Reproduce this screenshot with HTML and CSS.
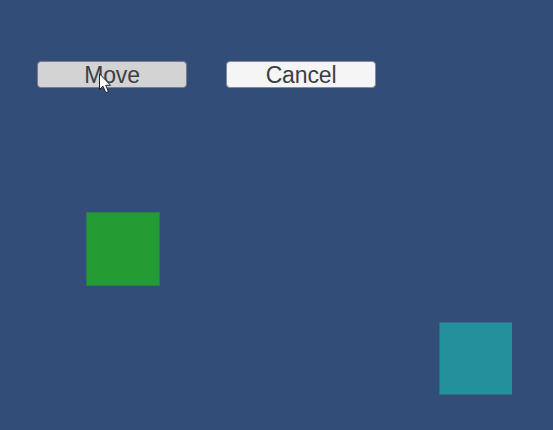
FILE: index.html
```html
<!DOCTYPE html>
<html lang="en">
<head>
<meta charset="utf-8">
<title>Move</title>
<link rel="stylesheet" href="styles.css">
</head>
<body>
<main class="stage">
  <div class="toolbar">
    <button class="btn btn-pressed">Move</button>
    <button class="btn">Cancel</button>
  </div>
  <div class="box box-green"></div>
  <div class="box box-teal"></div>
  <svg class="cursor" width="13" height="21" viewBox="0 0 13 21"><path d="M.5 .8V16.5L4 13.2L6.8 19.7L9.4 18.6L6.7 12.3H11.6Z" fill="#fff" stroke="#222" stroke-width="1"/></svg>
</main>
</body>
</html>
```
FILE: styles.css
```css
* { box-sizing: border-box; }
body { margin: 0; }
.stage {
  position: relative;
  width: 553px;
  height: 430px;
  overflow: hidden;
  background: #324d78;
}
.toolbar {
  display: flex;
  gap: 39px;
  padding: 61px 0 0 37px;
}
.btn {
  width: 150px;
  height: 27px;
  padding: 1px 0 0;
  border: 1px solid #848b94;
  border-radius: 4px;
  background: #f5f5f5;
  color: #3a3f46;
  font: 23px/25px "Liberation Sans", Arial, sans-serif;
  letter-spacing: -0.15px;
}
.btn-pressed { background: #d3d3d3; border-color: #757d88; }
.box { position: absolute; width: 74px; height: 74px; border: 1px solid; }
.box-green { left: 86px; top: 212px; background: #249b33; border-color: #287f49; }
.box-teal { left: 439px; top: 322px; width: 73px; height: 73px; background: #24909b; border-color: #2b7089; border-right-color: #24909b; }
.cursor { position: absolute; left: 99px; top: 73px; }
```
